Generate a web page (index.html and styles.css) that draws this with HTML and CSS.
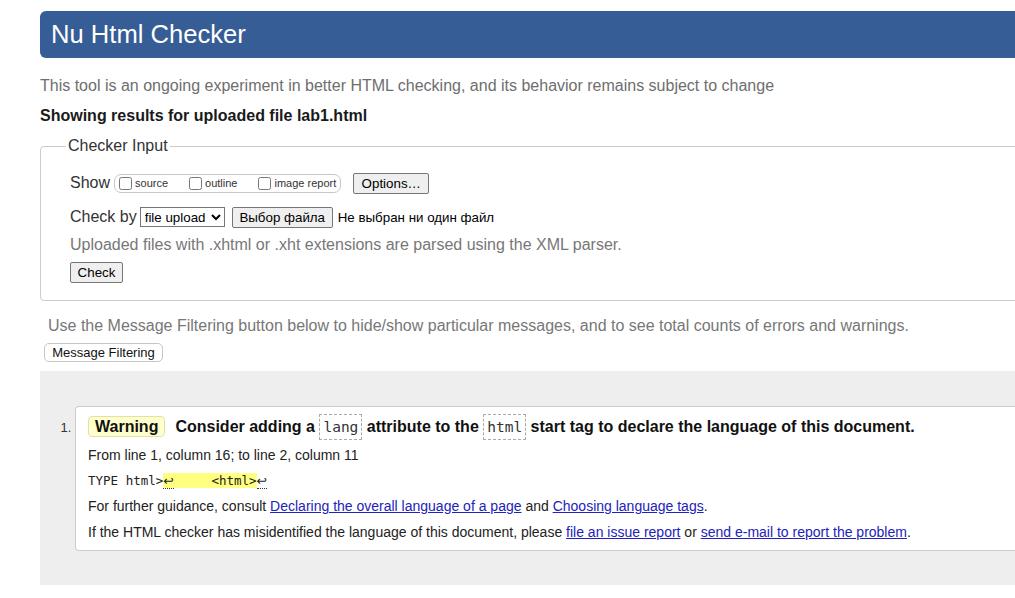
FILE: index.html
```html
<!DOCTYPE html>
<html lang="en">
<head>
<meta charset="utf-8">
<title>Nu Html Checker</title>
<link rel="stylesheet" href="styles.css">
</head>
<body>
<div class="page">
  <h1 class="title">Nu Html Checker</h1>
  <p class="intro">This tool is an ongoing experiment in better HTML checking, and its behavior remains subject to change</p>
  <p class="showing">Showing results for uploaded file lab1.html</p>

  <fieldset class="input">
    <legend class="legend">Checker Input</legend>
    <div class="row row-show">
      <span class="label">Show</span>
      <span class="group">
        <label class="opt"><input type="checkbox" class="cb">source</label>
        <label class="opt"><input type="checkbox" class="cb">outline</label>
        <label class="opt last"><input type="checkbox" class="cb">image report</label>
      </span>
      <button class="btn btn-options" type="button">Options…</button>
    </div>
    <div class="row row-check">
      <span class="label">Check by</span>
      <select class="sel"><option>file upload</option></select>
      <button class="btn btn-file" type="button">Выбор файла</button>
      <span class="nofile">Не выбран ни один файл</span>
    </div>
    <p class="note">Uploaded files with .xhtml or .xht extensions are parsed using the XML parser.</p>
    <button class="btn btn-check" type="button">Check</button>
  </fieldset>

  <p class="filter-note">Use the Message Filtering button below to hide/show particular messages, and to see total counts of errors and warnings.</p>
  <button class="btn-filter" type="button">Message Filtering</button>

  <div class="results">
    <ol class="msgs">
      <li class="msg">
        <p class="msg-head"><span class="badge">Warning</span><strong>Consider adding a <code class="tag">lang</code> attribute to the <code class="tag">html</code> start tag to declare the language of this document.</strong></p>
        <p class="loc">From line 1, column 16; to line 2, column 11</p>
        <p class="extract"><code class="ext">TYPE html&gt;<mark class="hl"><b class="lf">↩</b>     &lt;html&gt;</mark><b class="lf">↩</b></code></p>
        <p class="info">For further guidance, consult <a class="lnk" href="#">Declaring the overall language of a page</a> and <a class="lnk" href="#">Choosing language tags</a>.</p>
        <p class="info last">If the HTML checker has misidentified the language of this document, please <a class="lnk" href="#">file an issue report</a> or <a class="lnk" href="#">send e-mail to report the problem</a>.</p>
      </li>
    </ol>
  </div>
</div>
</body>
</html>
```

FILE: styles.css
```css
html, body {
  margin: 0;
  padding: 0;
  background: #fff;
  overflow: hidden;
}

body {
  font-family: "Liberation Sans", Arial, sans-serif;
  color: #222;
}

.page {
  margin-left: 40px;
  width: 1100px;
  padding-bottom: 40px;
}

.title {
  margin: 11px 0 0;
  height: 47px;
  line-height: 47px;
  padding-left: 11px;
  background: #365d95;
  color: #fff;
  font-size: 25.6px;
  font-weight: normal;
  border-radius: 6px 0 0 6px;
}

.intro {
  margin: 18px 0 0;
  font-size: 16px;
  line-height: 20px;
  color: #6e6e6e;
}

.showing {
  margin: 10px 0 0;
  font-size: 16px;
  line-height: 20px;
  font-weight: bold;
  color: #1a1a1a;
}

.input {
  margin: 10px 0 0;
  padding: 15px 0 17px 29px;
  border: 1px solid #ccc;
  border-radius: 4px 0 0 4px;
  min-width: 0;
}

.legend {
  margin-left: -4px;
  padding: 0 2px;
  font-size: 16px;
  line-height: 20px;
  color: #333;
}

.row {
  display: flex;
  align-items: center;
  height: 24px;
}

.row-check {
  margin-top: 10px;
}

.label {
  font-size: 16px;
  color: #333;
  margin-right: 4px;
}

.row-check .label {
  margin-right: 3px;
}

.group {
  display: inline-flex;
  align-items: center;
  height: 17px;
  border: 1px solid #c8c8c8;
  border-radius: 7px;
  padding: 0 4px 0 1px;
  margin-right: 12px;
}

.opt {
  display: inline-flex;
  align-items: center;
  font-size: 11px;
  color: #333;
  margin-right: 18px;
}

.opt.last {
  margin-right: 0;
}

.cb {
  width: 13px;
  height: 13px;
  margin: 0 3px 0 3px;
}

.btn {
  font-family: "Liberation Sans", Arial, sans-serif;
  font-size: 13.333px;
  height: 21px;
  padding: 0 7px;
  color: #000;
  background: #efefef;
  border: 1px solid #767676;
  border-radius: 2px;
  white-space: nowrap;
}

.btn-options {
  width: 76px;
}

.sel {
  font-family: "Liberation Sans", Arial, sans-serif;
  font-size: 13.333px;
  height: 20px;
  width: 85px;
  margin-right: 7px;
  color: #000;
  background: #fff;
  border: 1px solid #767676;
  border-radius: 0;
}

.btn-file {
  width: 101px;
  padding: 0;
  margin-right: 5px;
}

.nofile {
  font-size: 13.333px;
  color: #000;
}

.note {
  margin: 6px 0 0;
  font-size: 16px;
  line-height: 20px;
  color: #777;
}

.btn-check {
  display: block;
  margin-top: 7px;
  width: 53px;
  padding: 0;
}

.filter-note {
  margin: 15px 0 0 8px;
  font-size: 16px;
  line-height: 20px;
  color: #777;
}

.btn-filter {
  display: block;
  margin: 7px 0 0 4px;
  height: 19px;
  width: 119px;
  padding: 0;
  font-family: "Liberation Sans", Arial, sans-serif;
  font-size: 13px;
  color: #111;
  background: #fff;
  border: 1px solid #c6c6c6;
  border-radius: 5px;
}

.results {
  margin-top: 9px;
  background: #eee;
  padding: 35px 0 34px 35px;
}

.msgs {
  margin: 0;
  padding: 0;
  list-style: decimal outside;
}

.msg {
  background: #fff;
  border: 1px solid #ccc;
  border-right: none;
  border-radius: 4px 0 0 4px;
  padding: 7px 0 8px 12px;
}

.msg::marker {
  font-size: 13px;
  color: #333;
}

.msg-head {
  margin: 0;
  font-size: 16px;
  line-height: 26px;
  height: 26px;
  color: #111;
}

.badge {
  display: inline-block;
  height: 19px;
  line-height: 19px;
  padding: 0 6px;
  margin-right: 10px;
  background: #ffffcc;
  border: 1px solid #e2dfa8;
  border-radius: 4px;
  font-weight: bold;
  vertical-align: 0;
}

.tag {
  display: inline-block;
  font-family: "DejaVu Sans Mono", "Liberation Mono", monospace;
  font-size: 14.5px;
  font-weight: normal;
  line-height: 24px;
  padding: 0 3px;
  border: 1px dashed #aaa;
  color: #333;
}

.loc, .extract, .info {
  margin: 5px 0 0;
  font-size: 14px;
  line-height: 20px;
  color: #222;
}

.info.last {
  margin-top: 6px;
}

.ext {
  font-family: "DejaVu Sans Mono", "Liberation Mono", monospace;
  font-size: 12.5px;
  white-space: pre;
  color: #222;
}

.hl {
  background: #ffff80;
  color: #222;
}

.lf {
  font-family: "DejaVu Sans", sans-serif;
  font-weight: normal;
  border-bottom: 1px dotted #333;
}

.lnk {
  color: #2222bb;
  text-decoration: underline;
}
```
